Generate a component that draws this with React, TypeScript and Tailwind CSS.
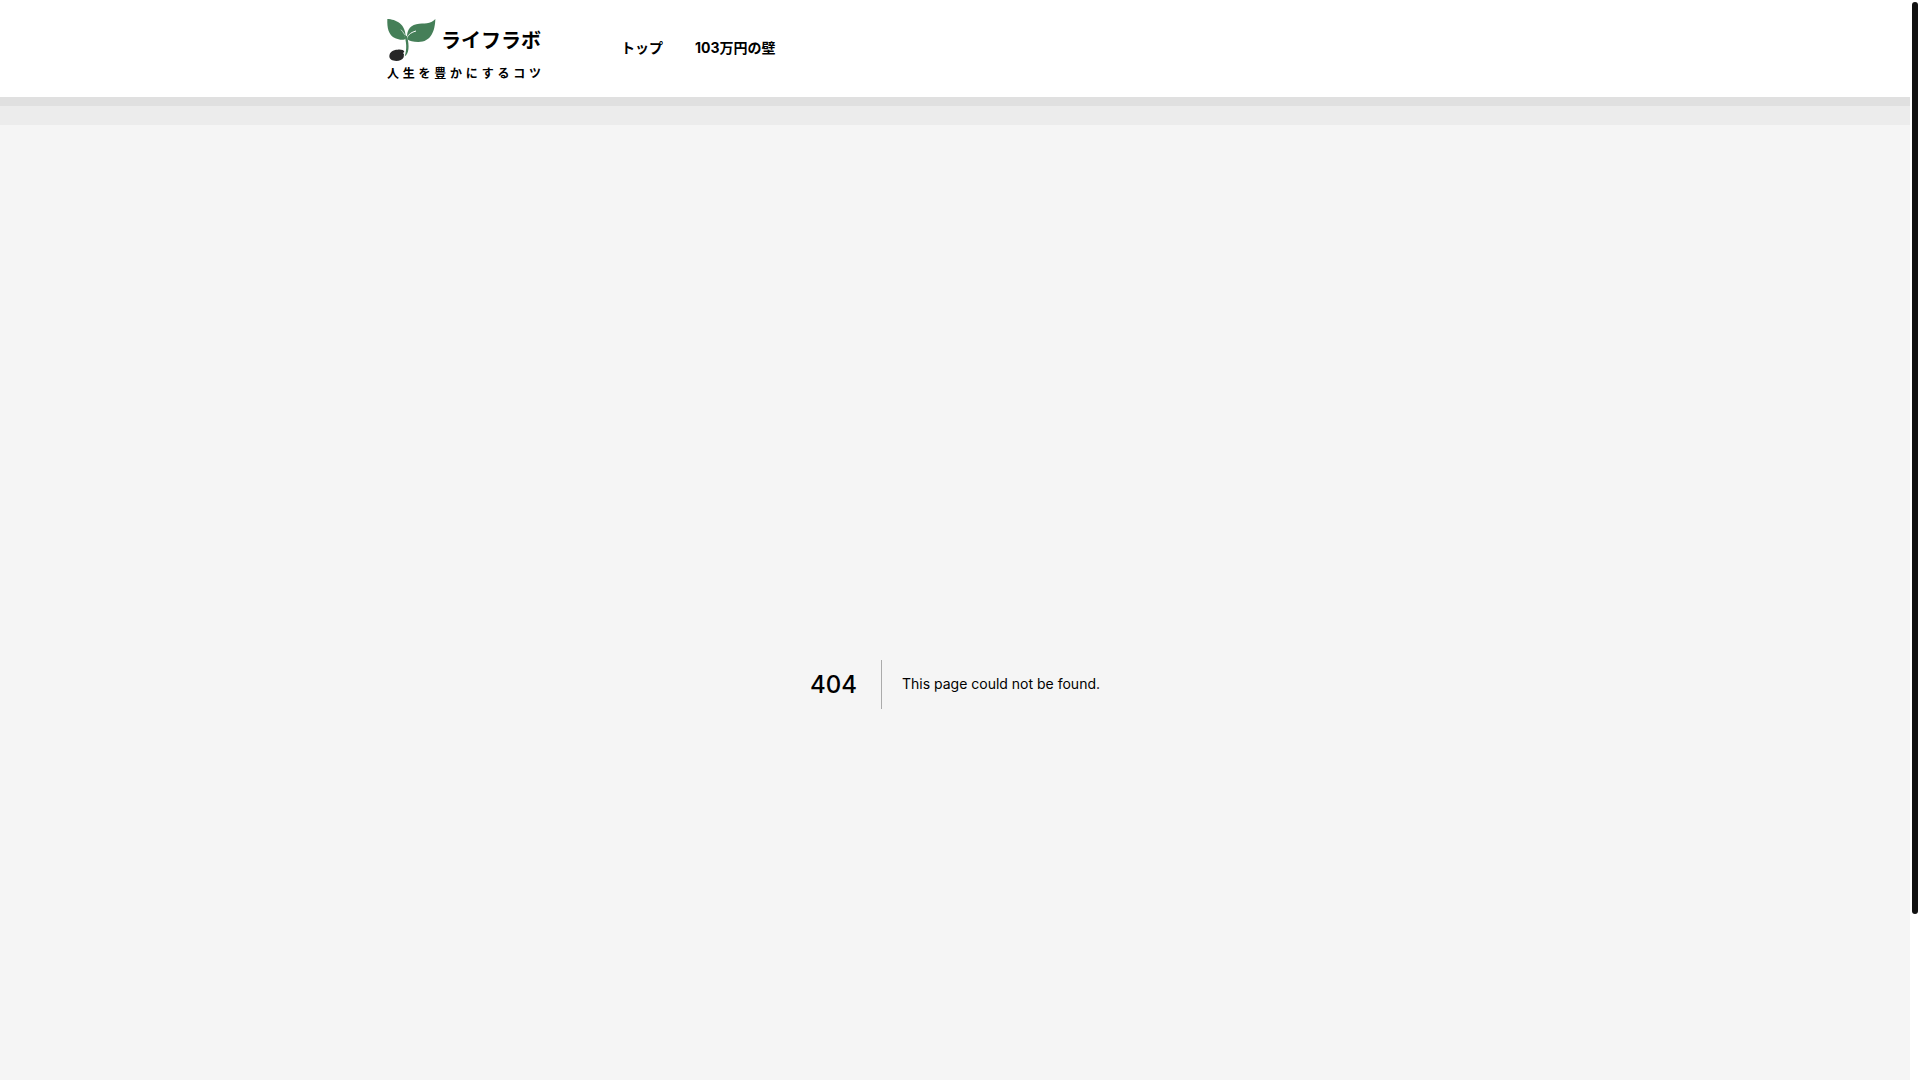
interface NavItem {
  label: string;
  href: string;
}

const navItems: NavItem[] = [
  { label: "トップ", href: "#top" },
  { label: "103万円の壁", href: "#wall" },
];

function SproutIcon() {
  return (
    <svg viewBox="20 26 147 129" className="h-[43px] w-[49px]" aria-hidden="true">
      <path
        d="M27 138C27 125 38 118 52 118C62 117 71 119 72 125C69 126 67 129 71 132C70 136 71 138 70 141C66 149 58 152 48 152C36 152 27 147 27 138Z"
        fill="#262626"
      />
      <path
        d="M21 26C46 27 78 40 76 84C74 91 55 89 45 84C24 74 20 53 21 26Z"
        fill="#457f58"
      />
      <path
        d="M165 26C164 62 152 95 114 95C98 95 88 93 81 87C77 68 86 45 108 42C132 37 150 43 165 26Z"
        fill="#457f58"
      />
      <path d="M79 86C81 76 89 67 107 62" fill="none" stroke="#fff" strokeWidth="3" />
      <path d="M62 58C70 66 74 74 76 84" fill="none" stroke="#fff" strokeWidth="2" />
      <path d="M70 72C79 92 80 118 73 138C86 132 88 106 80 78Z" fill="#457f58" />
    </svg>
  );
}

function Logo() {
  return (
    <a href="#top" className="block w-[154px] pt-1 text-black">
      <span className="flex items-center justify-between">
        <SproutIcon />
        <span className="text-xl leading-8 font-bold">ライフラボ</span>
      </span>
      <span className="mt-1 block text-xs leading-4 font-bold [text-align-last:justify]">
        人生を豊かにするコツ
      </span>
    </a>
  );
}

function Header() {
  return (
    <header className="bg-white">
      <div className="mx-auto flex h-[97px] max-w-6xl items-center gap-20 px-2">
        <Logo />
        <nav className="flex gap-8 pb-0.5 text-sm leading-5 font-bold">
          {navItems.map((item) => (
            <a key={item.label} href={item.href}>
              {item.label}
            </a>
          ))}
        </nav>
      </div>
    </header>
  );
}

function NotFound() {
  return (
    <main className="flex h-screen shrink-0 items-center justify-center">
      <h1 className="mr-5 border-r border-black/30 pr-6 text-2xl leading-[49px] font-medium">
        404
      </h1>
      <h2 className="text-sm leading-7">This page could not be found.</h2>
    </main>
  );
}

export default function App() {
  return (
    <div className="flex h-screen overflow-hidden bg-white font-['Inter','Noto_Sans_CJK_JP',sans-serif] text-black">
      <div className="flex flex-1 flex-col overflow-hidden bg-[#f5f5f5]">
        <Header />
        <div className="h-[9px] shrink-0 bg-[#e0e0e0]" />
        <div className="mb-[19px] h-[19px] shrink-0 bg-[#ececec]" />
        <NotFound />
      </div>
      {/* scroll track */}
      <div className="w-[10px] p-[2px]">
        <div className="h-[912px] max-h-full w-[6px] rounded-full bg-[#111]" />
      </div>
    </div>
  );
}
